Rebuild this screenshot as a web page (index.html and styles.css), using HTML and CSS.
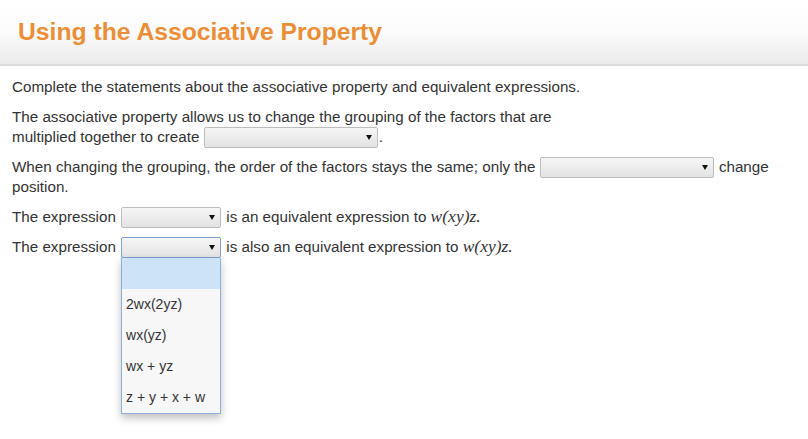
FILE: index.html
```html
<!DOCTYPE html>
<html>
<head>
<meta charset="utf-8">
<link rel="stylesheet" href="styles.css">
</head>
<body>
<header class="header">
  <h1 class="title">Using the Associative Property</h1>
</header>
<main class="content">
  <p class="para">Complete the statements about the associative property and equivalent expressions.</p>
  <p class="para narrow">The associative property allows us to change the grouping of the factors that are multiplied together to create <span class="select w174"><span class="arrow"></span></span>.</p>
  <p class="para">When changing the grouping, the order of the factors stays the same; only the <span class="select w174"><span class="arrow"></span></span> change position.</p>
  <p class="para">The expression <span class="select w100"><span class="arrow"></span></span> is an equivalent expression to <span class="math">w(xy)z.</span></p>
  <p class="para">The expression <span class="select-wrap"><span class="select w100 focused"><span class="arrow"></span></span><span class="menu">
      <span class="option active">&nbsp;</span>
      <span class="option">2wx(2yz)</span>
      <span class="option">wx(yz)</span>
      <span class="option">wx + yz</span>
      <span class="option">z + y + x + w</span>
    </span></span> is also an equivalent expression to <span class="math">w(xy)z.</span></p>
</main>
</body>
</html>
```

FILE: styles.css
```css
html, body {
  margin: 0;
  padding: 0;
  background: #fff;
}
body {
  min-height: 439px;
  font-family: "Liberation Sans", Arial, sans-serif;
  font-size: 15.2px;
  color: #333;
}
.header {
  height: 64px;
  border-bottom: 2px solid #dcdcdc;
  background: linear-gradient(to bottom, #ffffff 0%, #fbfbfb 50%, #ebebeb 100%);
  display: flex;
  align-items: center;
  padding-left: 18px;
}
.title {
  margin: 0;
  font-size: 24.7px;
  font-weight: bold;
  color: #ec8e36;
}
.content {
  padding: 11px 12px 0 12px;
}
.para {
  margin: 0 0 10px 0;
  line-height: 20px;
}
.narrow {
  max-width: 550px;
}
.select {
  display: inline-block;
  position: relative;
  box-sizing: border-box;
  height: 21px;
  vertical-align: middle;
  margin: -3px 1px -2px 0;
  border: 1px solid #bdbdbd;
  border-radius: 2px;
  background: linear-gradient(to bottom, #f6f6f6 0%, #e3e3e3 100%);
}
.w174 { width: 174px; }
.w100 { width: 100px; margin-left: 1px; }
.select.focused {
  border-color: #7a9fd0;
}
.arrow {
  position: absolute;
  right: 5px;
  top: 7px;
  width: 0;
  height: 0;
  border-left: 3px solid transparent;
  border-right: 3px solid transparent;
  border-top: 5px solid #111;
}
.select-wrap {
  position: relative;
  display: inline-block;
  height: 21px;
  vertical-align: middle;
  margin: -3px 1px -2px 1px;
}
.select-wrap .select {
  margin: 0;
  display: block;
}
.menu {
  position: absolute;
  left: 0;
  top: 21px;
  width: 100px;
  box-sizing: border-box;
  border: 1px solid #8eaedb;
  border-top: none;
  background: #f7f7f7;
  box-shadow: 0 4px 8px rgba(0,0,0,0.25);
  display: flex;
  flex-direction: column;
  z-index: 5;
  font-size: 14px;
  line-height: 31px;
}
.option {
  display: block;
  height: 31px;
  padding-left: 4px;
  color: #333;
  white-space: nowrap;
}
.option.active {
  background: #cde3f8;
}
.math {
  font-family: "Liberation Serif", "Times New Roman", serif;
  font-style: italic;
  font-size: 17.5px;
  line-height: 1;
}
```
